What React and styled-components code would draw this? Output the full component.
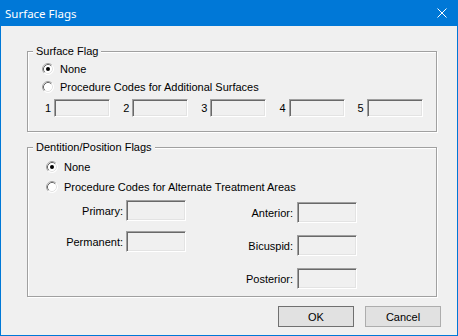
import React from "react";
import styled, { createGlobalStyle } from "styled-components";

const GlobalStyle = createGlobalStyle`
  html, body { margin: 0; padding: 0; background: #f0f0f0; }
  body { font-family: "Liberation Sans", Arial, sans-serif; font-size: 11px; color: #000; }
`;

const Window = styled.div`
  width: 458px;
  height: 336px;
  box-sizing: border-box;
  border: 1px solid #0078d7;
  border-top: none;
  background: #f0f0f0;
  display: flex;
  flex-direction: column;
`;

const TitleBar = styled.div`
  height: 26px;
  flex: none;
  background: #0078d7;
  color: #fff;
  display: flex;
  align-items: center;
  justify-content: space-between;
  padding: 0 10px 0 4px;
  font-family: "Noto Sans", "Liberation Sans", sans-serif;
  font-size: 11.5px;
`;

const Body = styled.div`
  display: flex;
  flex-direction: column;
  padding: 19px 16px 0 26px;
`;

const Group = styled.fieldset`
  margin: ${(p) => p.$mt || 0}px 0 0 0;
  padding: 0;
  width: 410px;
  min-width: 0;
  box-sizing: border-box;
  border: 1px solid #a0a0a0;
  box-shadow: 1px 1px 0 #fff, inset 1px 1px 0 #fff;
`;

const Legend = styled.legend`
  margin-left: 5px;
  padding: 0 3px;
  line-height: 13px;
  font-size: 11px;
  background: #f0f0f0;
`;

const GroupContent = styled.div`
  display: flex;
  flex-direction: column;
  gap: ${(p) => p.$gap || 0}px;
  padding: ${(p) => p.$pad};
`;

const RadioRow = styled.label`
  display: flex;
  align-items: center;
  gap: 6px;
  height: 18px;
  white-space: nowrap;
`;

const Radio = ({ checked }) => (
  <svg width="12" height="12" viewBox="0 0 12 12">
    <circle cx="6" cy="6" r="5.5" fill="#fff" stroke="#fff" />
    <path d="M2.11 9.89 A5.5 5.5 0 0 1 9.89 2.11" fill="none" stroke="#a0a0a0" />
    <path d="M2.82 9.18 A4.5 4.5 0 0 1 9.18 2.82" fill="none" stroke="#696969" />
    <path d="M9.18 2.82 A4.5 4.5 0 0 1 2.82 9.18" fill="none" stroke="#e3e3e3" />
    {checked && <circle cx="6" cy="6" r="2" fill="#000" />}
  </svg>
);

const NumRow = styled.div`
  display: flex;
  gap: 13px;
  padding-left: 3px;
  margin-top: 3px;
`;

const NumCell = styled.div`
  display: flex;
  align-items: center;
  gap: 3px;
`;

const Box = styled.div`
  width: ${(p) => p.$w}px;
  height: ${(p) => p.$h}px;
  box-sizing: border-box;
  background: #f0f0f0;
  border: 1px solid;
  border-color: #a0a0a0 #fff #fff #a0a0a0;
  box-shadow: inset 1px 1px 0 #696969, inset -1px -1px 0 #e3e3e3;
`;

const Fields = styled.div`
  display: flex;
  align-items: flex-start;
  margin: 2px 0 0 14px;
`;

const FieldGrid = styled.div`
  display: grid;
  grid-template-columns: 63px 60px;
  column-gap: ${(p) => p.$cg}px;
  row-gap: ${(p) => p.$rg}px;
  margin: ${(p) => p.$m || "0"};
`;

const FieldLabel = styled.span`
  text-align: right;
  align-self: center;
  white-space: nowrap;
`;

const Buttons = styled.div`
  display: flex;
  justify-content: flex-end;
  gap: 11px;
  margin-top: 9px;
`;

const Button = styled.button`
  width: 76px;
  height: 21px;
  box-sizing: border-box;
  background: #e1e1e1;
  border: 1px solid ${(p) => (p.$default ? "#707070" : "#adadad")};
  font-family: "Liberation Sans", Arial, sans-serif;
  font-size: 11px;
  color: #000;
  padding: 0;
`;

export default function App() {
  return (
    <>
      <GlobalStyle />
      <Window>
        <TitleBar>
          <span>Surface Flags</span>
          <svg width="10" height="10" viewBox="0 0 10 10">
            <path d="M0.5 0.5 L9.5 9.5 M9.5 0.5 L0.5 9.5" stroke="#fff" strokeWidth="1" />
          </svg>
        </TitleBar>
        <Body>
          <Group>
            <Legend>Surface Flag</Legend>
            <GroupContent $pad="2px 0 14px 14px">
              <RadioRow>
                <Radio checked />
                None
              </RadioRow>
              <RadioRow>
                <Radio />
                Procedure Codes for Additional Surfaces
              </RadioRow>
              <NumRow>
                {[1, 2, 3, 4, 5].map((n) => (
                  <NumCell key={n}>
                    <span>{n}</span>
                    <Box $w={56} $h={18} />
                  </NumCell>
                ))}
              </NumRow>
            </GroupContent>
          </Group>
          <Group $mt={9}>
            <Legend>Dentition/Position Flags</Legend>
            <GroupContent $pad="4px 0 7px 18px" $gap={2}>
              <RadioRow>
                <Radio checked />
                None
              </RadioRow>
              <RadioRow>
                <Radio />
                Procedure Codes for Alternate Treatment Areas
              </RadioRow>
              <Fields>
                <FieldGrid $cg={3} $rg={10}>
                  <FieldLabel>Primary:</FieldLabel>
                  <Box $w={60} $h={21} />
                  <FieldLabel>Permanent:</FieldLabel>
                  <Box $w={60} $h={21} />
                </FieldGrid>
                <FieldGrid $cg={4} $rg={12} $m="2px 0 0 44px">
                  <FieldLabel>Anterior:</FieldLabel>
                  <Box $w={60} $h={21} />
                  <FieldLabel>Bicuspid:</FieldLabel>
                  <Box $w={60} $h={21} />
                  <FieldLabel>Posterior:</FieldLabel>
                  <Box $w={60} $h={21} />
                </FieldGrid>
              </Fields>
            </GroupContent>
          </Group>
          <Buttons>
            <Button $default>OK</Button>
            <Button>Cancel</Button>
          </Buttons>
        </Body>
      </Window>
    </>
  );
}
